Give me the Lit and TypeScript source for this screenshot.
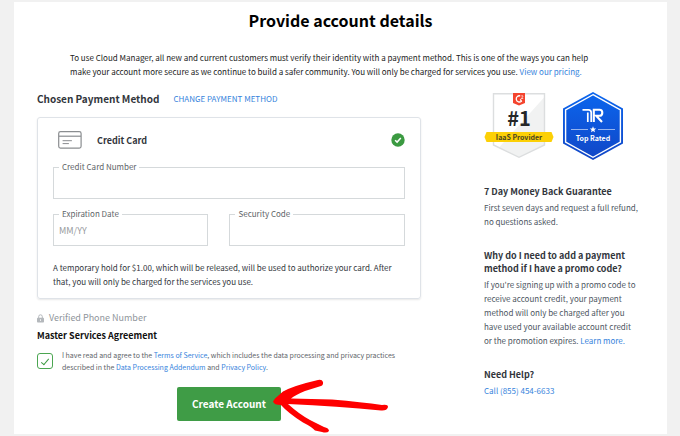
import { LitElement, html, css, svg } from "lit";
import { customElement, property } from "lit/decorators.js";

const cardIcon = svg`<svg class="card-icon" width="24" height="18" viewBox="0 0 24 18" fill="none" stroke="#8a8d90" stroke-linecap="round" aria-hidden="true">
  <rect x="0.7" y="0.7" width="22.4" height="16.4" rx="1.8" stroke-width="1.2"/>
  <path d="M1 5.2H23" stroke-width="1.2" stroke-linecap="butt"/>
  <path d="M5 9.7H13.5M5 12.6H10.5" stroke-width="1"/>
</svg>`;

const okIcon = svg`<svg width="14" height="14" viewBox="0 0 14 14" role="img" aria-label="Selected">
  <circle cx="7" cy="7" r="6.7" fill="#3b9a41"/>
  <path d="M4.1 7.2L6.1 9.1L9.8 5.1" fill="none" stroke="#fff" stroke-width="1.5"/>
</svg>`;

const lockIcon = svg`<svg width="7" height="9" viewBox="0 0 7 9" aria-hidden="true">
  <path d="M1.7 4V2.6A1.8 1.8 0 0 1 5.3 2.6V4" fill="none" stroke="#b4b8bc" stroke-width="1"/>
  <rect x="0" y="3.8" width="7" height="4.7" rx="0.8" fill="#b4b8bc"/>
  <path d="M3.5 5.2V7" stroke="#fff" stroke-width="0.8"/>
</svg>`;

const g2Badge = svg`<svg width="70" height="68" viewBox="0 0 70 68" role="img" aria-label="Number 1 IaaS Provider">
  <path d="M9.5 1.8H60.5V53L35 65.3L9.5 53Z" fill="#fff"/>
  <path d="M60.5 5V53L35 65.3L15 55.5Z" fill="#f1f2f2"/>
  <path d="M9.5 1.8H60.5V53L35 65.3L9.5 53Z" fill="none" stroke="#dcdedf" stroke-width="1.4"/>
  <path d="M29 1H41V11L35 13.6L29 11Z" fill="#f4442e"/>
  <path d="M36.2 3.9A3.1 3.1 0 1 0 37.4 9.2L36.3 7.3" fill="none" stroke="#fff" stroke-width="1.3"/>
  <path d="M37.2 4.3C37.5 3.2 39.2 3.5 38.9 4.6C38.7 5.3 37.3 5.5 37.2 6.5H39.2" fill="none" stroke="#fff" stroke-width="0.7"/>
  <text class="rank" x="35" y="34" text-anchor="middle">#1</text>
  <path d="M2.5 40H67.5L69.5 45L67.5 50H2.5L0.5 45Z" fill="#fcd006"/>
  <text class="ribbon" x="35" y="48" text-anchor="middle">IaaS Provider</text>
</svg>`;

const trBadge = svg`<svg width="60" height="68" viewBox="0 0 60 68" role="img" aria-label="TrustRadius Top Rated">
  <defs><linearGradient id="tr" x1="0" y1="0" x2="0" y2="1">
    <stop offset="0" stop-color="#0b66ee"/><stop offset="1" stop-color="#1146c6"/>
  </linearGradient></defs>
  <path d="M30 0L60 16.5V51.5L30 68L0 51.5V16.5Z" fill="url(#tr)"/>
  <path d="M30 2.7L57.4 17.8V50.2L30 65.3L2.6 50.2V17.8Z" fill="none" stroke="#fff" stroke-width="1.4"/>
  <path d="M19.5 17.8H25.5Q28.2 17.8 28.2 20.5V30M24.8 20.5V30" fill="none" stroke="#fff" stroke-width="1.7"/>
  <path d="M30.8 30V17.8H36.5Q39.3 17.8 39.3 20.7Q39.3 23.8 36.5 23.8H33.2L39 30" fill="none" stroke="#fff" stroke-width="2.1"/>
  <path d="M8 37.5H25M35 37.5H52" stroke="#b9cdf5" stroke-width="0.8"/>
  <path d="M30 34.2L30.9 36.4L33.2 36.5L31.4 38L32 40.2L30 39L28 40.2L28.6 38L26.8 36.5L29.1 36.4Z" fill="#fff"/>
  <text class="rated" x="30" y="49" text-anchor="middle">Top Rated</text>
</svg>`;

const arrow = svg`<svg class="arrow" width="118" height="56" viewBox="0 0 118 56" fill="#fe0000" aria-hidden="true">
  <path d="M3 19.5L11 12.5Q22 6.5 46 1Q50 0 51 3Q51.500 6 49 7L33 12Q23 16 19 19.500L60 20.500Q90 23 110 26Q116 25 116 28Q115 32 109 31.500Q66 27 16 25Q27 35 38 41L52 48Q57 49 57 52Q55 54.500 50 53L43 51.500Q40 48 31 43.500Q16 34 9 26Q2 26 1 22.500Z"/>
</svg>`;

@customElement("outlined-field")
class OutlinedField extends LitElement {
  @property() label = "";
  @property() placeholder = "";

  static styles = css`
    :host { display: block; position: relative; min-width: 0; }
    label {
      position: absolute; top: -6px; left: 6px; padding: 0 3px;
      background: #fff; color: #606468;
      font-size: 8px; line-height: 12px;
    }
    input {
      display: block; box-sizing: border-box; width: 100%; height: 32px;
      margin: 0; padding: 0 5px; border: 1px solid #d5d9db; border-radius: 0;
      background: #fff; color: #32363c; font: inherit; font-size: 9px; outline: 0;
    }
    input::placeholder { color: #96999c; opacity: 1; }
  `;

  render() {
    return html`<label for="control">${this.label}</label>
      <input id="control" type="text" placeholder=${this.placeholder} />`;
  }
}

@customElement("app-root")
class AppRoot extends LitElement {
  static styles = css`
    :host {
      display: block; box-sizing: border-box; padding: 2px 13px 2px 14px;
      background: #f1f1f1; color: #32363c;
      font-family: "Noto Sans CJK SC", "Noto Sans", sans-serif;
      font-size: 8px; line-height: 14px;
    }
    h1, h2, h3, p { margin: 0; }
    a { color: #3683dc; text-decoration: none; }
    main { background: #fff; padding: 4px 23px 13px; }
    h1 { font-size: 16px; line-height: 28px; font-weight: 700; text-align: center; color: #000; }
    .intro { margin: 17px 40px 0 33px; color: #222; }
    .columns { display: grid; grid-template-columns: minmax(0, 1fr) 155px; column-gap: 63px; margin-top: 12px; padding-right: 5px; }
    h2 { font-size: 10px; line-height: 16px; font-weight: 700; }
    .method { display: flex; align-items: center; gap: 14px; }
    .method a { line-height: 16px; }
    .panel {
      margin-top: 10px; padding: 14px 15px 9px; border: 1px solid #dfe3e8; border-radius: 3px;
      box-shadow: 0 1px 2px #00000018;
    }
    .panel-head { display: flex; align-items: center; gap: 15px; height: 16px; padding-left: 5px; }
    .panel-head h3 { flex: 1; }
    h3 { font-size: 9px; line-height: 13px; font-weight: 700; }
    .card-icon { flex: none; }
    .fields { display: grid; grid-template-columns: 155fr 175fr; gap: 15px 21px; margin-top: 19px; }
    .wide { grid-column: 1 / -1; }
    .note { margin-top: 15px; }
    .verified { display: flex; align-items: center; gap: 5px; margin-top: 11px; color: #8f959b; font-size: 9px; line-height: 16px; }
    .agreement { margin-top: 2px; color: #111; line-height: 16px; }
    .terms { display: flex; align-items: center; gap: 9px; margin-top: 5px; color: #606469; font-size: 7px; line-height: 12px; }
    .terms input {
      appearance: none; flex: none; width: 16px; height: 16px; margin: 0;
      border: 1px solid #4ba651; border-radius: 3px; background: #fff; display: grid; place-items: center;
    }
    .terms input:checked::after {
      content: ""; width: 3px; height: 7px; border: solid #3b9a41; border-width: 0 1px 1px 0; transform: rotate(40deg);
    }
    .submit { position: relative; width: max-content; margin: 14px auto 0; }
    button {
      display: block; height: 34px; padding: 0 15px; border: 0; border-radius: 2px;
      background: #3f9c46; color: #fff; font: inherit; font-size: 10px; font-weight: 700;
    }
    .arrow { position: absolute; left: 95px; top: -8px; pointer-events: none; }
    .badges { display: flex; gap: 9px; margin: 1px 0 25px; }
    aside { color: #4d565f; }
    aside h3 { color: #32363c; }
    aside section { margin-bottom: 20px; }
    aside section:last-child { margin-bottom: 0; }
    aside p { margin-top: 3px; }
    .rank { font-size: 20px; font-weight: 700; fill: #262829; }
    .ribbon { font-size: 7px; font-weight: 700; fill: #4a4420; }
    .rated { font-size: 7px; font-weight: 700; fill: #fff; }
  `;

  render() {
    return html`<main>
      <h1>Provide account details</h1>
      <p class="intro">
        To use Cloud Manager, all new and current customers must verify their identity with a payment method. This is one of the ways you can help
        make your account more secure as we continue to build a safer community. You will only be charged for services you use.
        <a href="#pricing">View our pricing.</a>
      </p>
      <div class="columns">
        <form>
          <div class="method">
            <h2>Chosen Payment Method</h2>
            <a href="#method">CHANGE PAYMENT METHOD</a>
          </div>
          <div class="panel">
            <div class="panel-head">${cardIcon}<h3>Credit Card</h3>${okIcon}</div>
            <div class="fields">
              <outlined-field class="wide" label="Credit Card Number"></outlined-field>
              <outlined-field label="Expiration Date" placeholder="MM/YY"></outlined-field>
              <outlined-field label="Security Code"></outlined-field>
            </div>
            <p class="note">
              A temporary hold for $1.00, which will be released, will be used to authorize your card. After
              that, you will only be charged for the services you use.
            </p>
          </div>
          <p class="verified">${lockIcon}<span>Verified Phone Number</span></p>
          <h3 class="agreement">Master Services Agreement</h3>
          <div class="terms">
            <input id="agree" type="checkbox" checked />
            <label for="agree">I have read and agree to the <a href="#terms">Terms of Service</a>, which includes the data processing and privacy practices
              described in the <a href="#dpa">Data Processing Addendum</a> and <a href="#privacy">Privacy Policy</a>.</label>
          </div>
          <div class="submit"><button type="button">Create Account</button>${arrow}</div>
        </form>
        <aside>
          <div class="badges">${g2Badge}${trBadge}</div>
          <section>
            <h3>7 Day Money Back Guarantee</h3>
            <p>First seven days and request a full refund, no questions asked.</p>
          </section>
          <section>
            <h3>Why do I need to add a payment method if I have a promo code?</h3>
            <p>If you're signing up with a promo code to receive account credit, your payment method will only be charged after you have used your available account credit or the promotion expires. <a href="#promo">Learn more.</a></p>
          </section>
          <section>
            <h3>Need Help?</h3>
            <p><a href="tel:8554546633">Call (855) 454-6633</a></p>
          </section>
        </aside>
      </div>
    </main>`;
  }
}
